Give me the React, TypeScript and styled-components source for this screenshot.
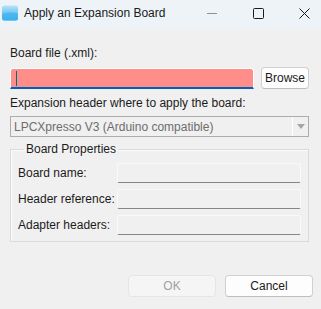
import React from "react";
import styled, { createGlobalStyle } from "styled-components";

const GlobalStyle = createGlobalStyle`
  html, body {
    margin: 0;
    padding: 0;
    background: #f0f0f0;
  }
  * {
    box-sizing: border-box;
  }
`;

const Window = styled.div`
  width: 321px;
  height: 309px;
  overflow: hidden;
  display: flex;
  flex-direction: column;
  background: #f0f0f0;
  font-family: "Liberation Sans", Arial, sans-serif;
  font-size: 12px;
  color: #1b1b1b;
`;

const TitleBar = styled.div`
  height: 29px;
  flex-shrink: 0;
  display: flex;
  align-items: center;
  padding-bottom: 3px;
  padding-left: 2px;
  background: #eef3f8;
`;

const TitleText = styled.span`
  margin-left: 6px;
  font-size: 12px;
  line-height: 16px;
  color: #1a1a1a;
`;

const Controls = styled.div`
  margin-left: auto;
  margin-right: -6px;
  display: flex;
`;

const ControlButton = styled.div`
  width: 46px;
  height: 20px;
  display: flex;
  align-items: center;
  justify-content: center;
`;

const Body = styled.div`
  display: flex;
  flex-direction: column;
  padding: 16px 12px 0 10px;
`;

const Label = styled.div<{ $gap?: number }>`
  line-height: 16px;
  margin-top: ${(p) => p.$gap ?? 0}px;
`;

const FileRow = styled.div`
  display: flex;
  align-items: flex-end;
  gap: 7px;
  margin-top: 6px;
`;

const FileInput = styled.div`
  width: 244px;
  height: 21px;
  background: #ff8e8a;
  border: 1px solid #ffffff;
  border-bottom: 2px solid #005fb8;
  border-radius: 3px 3px 0 0;
  display: flex;
  align-items: center;
  padding-left: 5px;
`;

const Caret = styled.div`
  width: 1px;
  height: 15px;
  background: #007075;
`;

const Button = styled.div<{ $disabled?: boolean }>`
  height: 22px;
  display: flex;
  align-items: center;
  justify-content: center;
  border-radius: 4px;
  line-height: 16px;
  background: ${(p) => (p.$disabled ? "#f5f5f5" : "#fdfdfd")};
  border: 1px solid ${(p) => (p.$disabled ? "#e5e5e5" : "#d0d0d0")};
  border-bottom-color: ${(p) => (p.$disabled ? "#e5e5e5" : "#bdbdbd")};
  color: ${(p) => (p.$disabled ? "#a0a0a0" : "#1b1b1b")};
`;

const BrowseButton = styled(Button)`
  width: 48px;
`;

const Combo = styled.div`
  margin-top: 5px;
  height: 21px;
  border: 1px solid #adadad;
  background: #f0f0f0;
  display: flex;
  align-items: center;
`;

const ComboText = styled.span`
  flex: 1;
  padding-left: 3px;
  color: #6d6d6d;
  line-height: 16px;
`;

const ComboArrow = styled.div`
  width: 16px;
  height: 100%;
  border-left: 1px solid #ffffff;
  display: flex;
  align-items: center;
  justify-content: center;
`;

const GroupBox = styled.fieldset`
  margin: 4px 0 0 0;
  padding: 6px 7px 6px 7px;
  border: 1px solid #dadada;
  box-shadow: inset 1px 1px 0 #fbfbfb;
  min-width: 0;
`;

const GroupTitle = styled.legend`
  margin-left: 6px;
  padding: 0 2px;
  line-height: 16px;
  font-size: 12px;
  color: #1b1b1b;
`;

const PropGrid = styled.div`
  display: grid;
  grid-template-columns: 99px 1fr;
  row-gap: 6px;
  align-items: center;
`;

const PropLabel = styled.span`
  line-height: 16px;
`;

const PropField = styled.div`
  height: 20px;
  background: #f0f0f0;
  border: 1px solid #f9f9f9;
  border-bottom: 1px solid #858585;
  border-radius: 2px;
`;

const Footer = styled.div`
  display: flex;
  justify-content: flex-end;
  gap: 9px;
  margin-top: 33px;
  padding-right: 8px;
`;

const DialogButton = styled(Button)`
  width: 88px;
`;

function AppIcon() {
  return (
    <svg width="16" height="16" viewBox="0 0 16 16">
      <defs>
        <linearGradient id="ig" x1="0" y1="0" x2="0" y2="1">
          <stop offset="0" stopColor="#b6e3f8" />
          <stop offset="1" stopColor="#2ea9ea" />
        </linearGradient>
      </defs>
      <rect x="0" y="0.5" width="16" height="15" rx="2.5" fill="url(#ig)" />
      <path d="M0 9 Q8 6.5 16 8.5 L16 13 Q16 15.5 13.5 15.5 L2.5 15.5 Q0 15.5 0 13 Z" fill="#3fb4ef" opacity="0.7" />
    </svg>
  );
}

function App() {
  return (
    <Window>
      <GlobalStyle />
      <TitleBar>
        <AppIcon />
        <TitleText>Apply an Expansion Board</TitleText>
        <Controls>
          <ControlButton>
            <svg width="10" height="10" viewBox="0 0 10 10">
              <line x1="0" y1="5.5" x2="10" y2="5.5" stroke="#8f8f8f" strokeWidth="1" />
            </svg>
          </ControlButton>
          <ControlButton>
            <svg width="11" height="11" viewBox="0 0 11 11">
              <rect x="0.5" y="0.5" width="10" height="10" rx="1" fill="none" stroke="#1a1a1a" strokeWidth="1" />
            </svg>
          </ControlButton>
          <ControlButton>
            <svg width="11" height="11" viewBox="0 0 11 11">
              <path d="M0.5 0.5 L10.5 10.5 M10.5 0.5 L0.5 10.5" stroke="#1a1a1a" strokeWidth="1" />
            </svg>
          </ControlButton>
        </Controls>
      </TitleBar>

      <Body>
        <Label>Board file (.xml):</Label>
        <FileRow>
          <FileInput>
            <Caret />
          </FileInput>
          <BrowseButton>Browse</BrowseButton>
        </FileRow>

        <Label $gap={6}>Expansion header where to apply the board:</Label>
        <Combo>
          <ComboText>LPCXpresso V3 (Arduino compatible)</ComboText>
          <ComboArrow>
            <svg width="8" height="5" viewBox="0 0 8 5">
              <path d="M0 0 L8 0 L4 5 Z" fill="#a6a6a6" />
            </svg>
          </ComboArrow>
        </Combo>

        <GroupBox>
          <GroupTitle>Board Properties</GroupTitle>
          <PropGrid>
            <PropLabel>Board name:</PropLabel>
            <PropField />
            <PropLabel>Header reference:</PropLabel>
            <PropField />
            <PropLabel>Adapter headers:</PropLabel>
            <PropField />
          </PropGrid>
        </GroupBox>
      </Body>

      <Footer>
        <DialogButton $disabled>OK</DialogButton>
        <DialogButton>Cancel</DialogButton>
      </Footer>
    </Window>
  );
}

export default App;
